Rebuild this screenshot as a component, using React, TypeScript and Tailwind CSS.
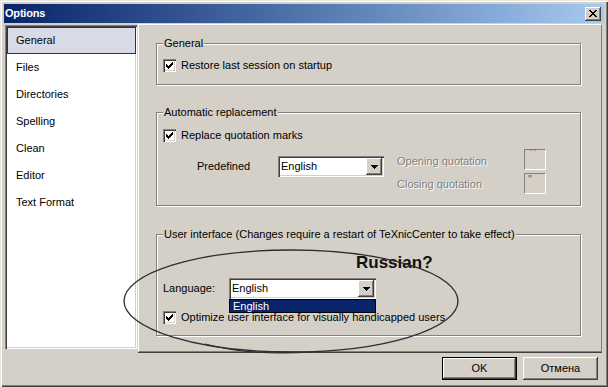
import React from 'react';

const sunken =
  'shadow-[inset_1px_1px_0_#808080,inset_2px_2px_0_#404040,inset_-1px_-1px_0_#ffffff,inset_-2px_-2px_0_#d4d0c8]';
const raised =
  'shadow-[inset_-1px_-1px_0_#404040,inset_1px_1px_0_#ffffff,inset_-2px_-2px_0_#808080,inset_2px_2px_0_#d4d0c8]';

const CheckMark = () => (
  <svg width="13" height="13" viewBox="0 0 13 13" shapeRendering="crispEdges" className="block">
    <rect x="3" y="5" width="1" height="3" fill="#000" />
    <rect x="4" y="6" width="1" height="3" fill="#000" />
    <rect x="5" y="7" width="1" height="3" fill="#000" />
    <rect x="6" y="6" width="1" height="3" fill="#000" />
    <rect x="7" y="5" width="1" height="3" fill="#000" />
    <rect x="8" y="4" width="1" height="3" fill="#000" />
    <rect x="9" y="3" width="1" height="3" fill="#000" />
  </svg>
);

const CheckBox = () => (
  <span className={`block w-[13px] h-[13px] shrink-0 bg-white ${sunken}`}>
    <CheckMark />
  </span>
);

const Arrow = () => (
  <svg width="7" height="4" viewBox="0 0 7 4" shapeRendering="crispEdges" className="block">
    <rect x="0" y="0" width="7" height="1" fill="#000" />
    <rect x="1" y="1" width="5" height="1" fill="#000" />
    <rect x="2" y="2" width="3" height="1" fill="#000" />
    <rect x="3" y="3" width="1" height="1" fill="#000" />
  </svg>
);

const Combo = ({ className, children }: { className: string; children?: React.ReactNode }) => (
  <div className={`relative flex h-[21px] p-[2px] bg-white ${sunken} ${className}`}>
    <span className="flex-1 pl-[1px] leading-[17px]">English</span>
    <span className={`flex items-center justify-center w-[16px] h-[17px] bg-[#d4d0c8] ${raised}`}>
      <Arrow />
    </span>
    {children}
  </div>
);

const Group = ({
  title,
  className,
  children,
}: {
  title: string;
  className: string;
  children?: React.ReactNode;
}) => (
  <div
    className={`flex flex-col w-[425px] border border-[#808080] shadow-[inset_1px_1px_0_#ffffff,1px_1px_0_#ffffff] ${className}`}
  >
    <span className="-mt-[7px] ml-[6px] px-[1px] w-fit bg-[#d4d0c8] leading-[13px] whitespace-nowrap">{title}</span>
    {children}
  </div>
);

const CheckRow = ({ label, className }: { label: string; className: string }) => (
  <div className={`flex items-center gap-[5px] ml-[6px] h-[13px] ${className}`}>
    <CheckBox />
    <span className="leading-[13px] whitespace-nowrap">{label}</span>
  </div>
);

const pages = ['General', 'Files', 'Directories', 'Spelling', 'Clean', 'Editor', 'Text Format'];

const disabledText = 'text-[#808080] [text-shadow:1px_1px_0_#ffffff]';

export default function App() {
  return (
    <div className="relative w-[608px] h-[387px] overflow-hidden bg-[#d4d0c8] text-[11px] text-black font-['Liberation_Sans',Arial,sans-serif] shadow-[inset_1px_1px_0_#e8e6e1,inset_2px_2px_0_#ffffff,inset_-1px_-1px_0_#404040,inset_-2px_-2px_0_#808080] pt-[4px] px-[4px] flex flex-col">
      {/* title bar */}
      <div className="flex items-center justify-between h-[19px] pl-[1px] pr-[3px] bg-linear-to-r from-[#0a246a] to-[#a6caf0]">
        <span className="font-bold text-white text-[11px] leading-[19px] tracking-[-0.2px]">Options</span>
        <span className={`flex items-center justify-center w-[16px] h-[14px] bg-[#d4d0c8] ${raised}`}>
          <svg width="8" height="7" viewBox="0 0 8 7" shapeRendering="crispEdges" className="block">
            <path d="M0 0h2v1h-2zM6 0h2v1h-2zM1 1h2v1h-2zM5 1h2v1h-2zM2 2h4v1h-4zM3 3h2v1h-2zM2 4h4v1h-4zM1 5h2v1h-2zM5 5h2v1h-2zM0 6h2v1h-2zM6 6h2v1h-2z" fill="#000" />
          </svg>
        </span>
      </div>

      {/* body */}
      <div className="flex items-start">
        <div className={`mt-[2px] ml-[1px] w-[132px] h-[324px] bg-white p-[2px] ${sunken}`}>
          {pages.map((p, i) =>
            i === 0 ? (
              <div
                key={p}
                className="flex items-center h-[27px] pl-[8px] bg-[#d8dbe7] border border-[#24305a] -mr-[1px]"
              >
                {p}
              </div>
            ) : (
              <div key={p} className="flex items-center h-[27px] pl-[9px]">
                {p}
              </div>
            )
          )}
        </div>

        <div className="mt-[1px] ml-[1px] w-[464px] h-[328px] border-l border-t border-white border-r border-r-[#808080] border-b border-b-[#808080] shadow-[0_1px_0_#404040] pl-[17px] flex flex-col">
          <Group title="General" className="mt-[18px] h-[42px]">
            <CheckRow label="Restore last session on startup" className="mt-[9px]" />
          </Group>

          <Group title="Automatic replacement" className="mt-[27px] h-[94px]">
            <CheckRow label="Replace quotation marks" className="mt-[10px]" />
            <div className="flex items-start mt-[7px]">
              <div className="flex items-center mt-[7px] ml-[40px]">
                <span className="w-[81px] leading-[13px]">Predefined</span>
                <Combo className="w-[106px]" />
              </div>
              <div className="grid grid-cols-[127px_22px] gap-y-[3px] ml-[13px]">
                <span className={`flex items-center pt-[3px] ${disabledText}`}>Opening quotation</span>
                <span className="w-[22px] h-[21px] border-t border-l border-[#808080] border-r border-r-white border-b border-b-white pl-[4px] text-[#606060] leading-[9px]">
                  ``
                </span>
                <span className={`flex items-center pt-[2px] ${disabledText}`}>Closing quotation</span>
                <span className="w-[22px] h-[21px] border-t border-l border-[#808080] border-r border-r-white border-b border-b-white pl-[3px] text-[#606060] leading-[11px]">
                  ''
                </span>
              </div>
            </div>
          </Group>

          <Group
            title="User interface (Changes require a restart of TeXnicCenter to take effect)"
            className="mt-[28px] h-[102px]"
          >
            <div className="flex items-center mt-[37px] ml-[6px]">
              <span className="w-[66px] leading-[13px]">Language:</span>
              <Combo className="w-[147px]">
                <div className="absolute left-0 top-full w-[147px] h-[14px] border border-black bg-[#0a246a] text-white leading-[12px] pl-[3px]">
                  English
                </div>
              </Combo>
            </div>
            <CheckRow label="Optimize user interface for visually handicapped users" className="mt-[12px]" />
          </Group>
        </div>
      </div>

      {/* buttons */}
      <div className="flex justify-end gap-[6px] mt-[5px] pr-[6px]">
        <button className="w-[75px] h-[23px] border border-black bg-[#d4d0c8] shadow-[inset_-1px_-1px_0_#404040,inset_1px_1px_0_#ffffff,inset_-2px_-2px_0_#808080]">
          OK
        </button>
        <button className={`w-[75px] h-[23px] bg-[#d4d0c8] ${raised}`}>Отмена</button>
      </div>

      {/* annotation drawn over the screenshot */}
      <span className="absolute left-[356px] top-[253px] text-[17px] leading-[20px] font-bold text-[#111]">
        Russian?
      </span>
      <svg className="absolute inset-0 pointer-events-none" width="608" height="387" viewBox="0 0 608 387">
        <ellipse cx="291" cy="301" rx="167" ry="51" fill="none" stroke="#2e2e2e" strokeWidth="1.3" />
        <path d="M205 344 Q 250 356 312 352" fill="none" stroke="#2e2e2e" strokeWidth="1.1" />
      </svg>
    </div>
  );
}
